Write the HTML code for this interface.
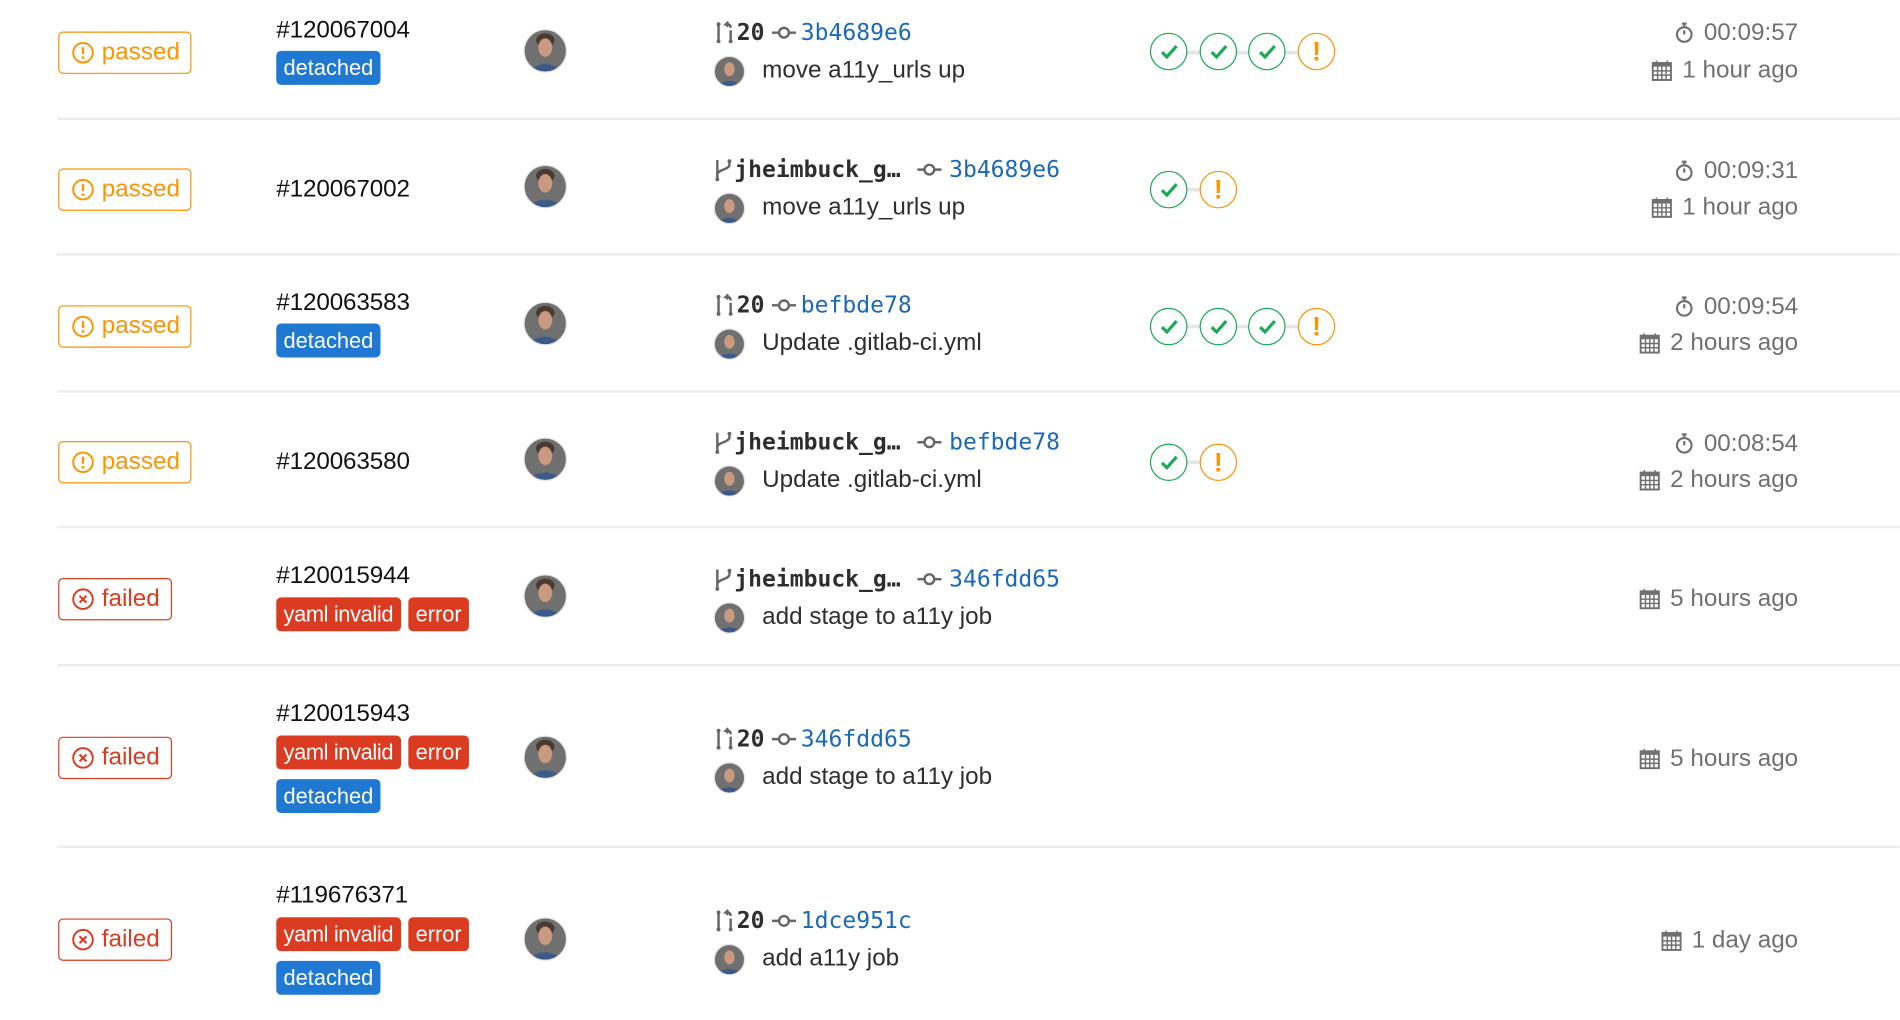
<!DOCTYPE html>
<html><head><meta charset="utf-8"><style>
html,body{margin:0;padding:0;background:#fff;width:1900px;height:1020px;overflow:hidden}
#c{position:absolute;left:0;top:0;width:1568px;height:842px;transform:scale(1.2117);transform-origin:0 0;font-family:"Liberation Sans",sans-serif}
.sep{position:absolute;left:47px;right:0;height:2px;background:#ececec}
.t{position:absolute;white-space:nowrap;line-height:30px;height:30px;font-size:20px;color:#2e2e2e}
.id{color:#111;letter-spacing:-0.1px}
.st{position:absolute;left:48px;height:33px;border:1.5px solid;border-radius:4px;font-size:20px;line-height:33px;display:flex;align-items:center;box-sizing:content-box}
.st svg{margin:0 6px 0 10px}
.ok{color:#fc9403;border-color:#fc9403;width:108px}
.ko{color:#db3b21;border-color:#db3b21;width:92px}
.bd{position:absolute;height:28px;line-height:28px;border-radius:4px;color:#fff;font-size:18px;padding:0 6px;box-sizing:border-box;white-space:nowrap;overflow:hidden}
.bl{background:#1f78d1}.rd{background:#db3b21}
.yi{width:103px;letter-spacing:-0.3px}
.av{position:absolute;width:34px;height:34px;border-radius:50%;border:1.5px solid #e3e3e3;background:radial-gradient(ellipse 6px 8px at 50% 42%,#c99a80 90%,transparent 100%),radial-gradient(ellipse 8px 6px at 50% 24%,#4a3a30 90%,transparent 100%),radial-gradient(ellipse 14px 10px at 50% 110%,#3b5a8a 90%,transparent 100%),#707070}
.sav{position:absolute;width:24px;height:24px;border-radius:50%;border:1px solid #e3e3e3;background:radial-gradient(ellipse 4.5px 6px at 50% 42%,#c99a80 90%,transparent 100%),radial-gradient(ellipse 10px 7px at 50% 110%,#3b5a8a 90%,transparent 100%),#707070}
.mono{font-family:"DejaVu Sans Mono","Liberation Mono",monospace}
.ref{font-weight:bold;color:#2e2e2e;font-size:19px}
.sha{color:#1b69b6;font-size:19px}
.sg{position:absolute;width:29px;height:29px;border-radius:50%;border:1.5px solid;background:#fff;display:flex;align-items:center;justify-content:center}
.g{border-color:#1aaa55}.o{border-color:#fc9403;color:#fc9403;font-weight:bold;font-size:22px}
.ln{position:absolute;height:3px;background:#e5e5e5}
.tm{position:absolute;right:84px;line-height:30px;height:30px;font-size:20px;color:#707070;white-space:nowrap;display:flex;align-items:center}
.tm svg{margin-right:8px}
</style></head><body><div id="c">

<div class="sep" style="top:97px"></div>
<div class="sep" style="top:209px"></div>
<div class="sep" style="top:322px"></div>
<div class="sep" style="top:434px"></div>
<div class="sep" style="top:548px"></div>
<div class="sep" style="top:698px"></div>

<!-- ROW 1 -->
<div class="st ok" style="top:26px"><svg width="19" height="19" viewBox="0 0 20 20"><circle cx="10" cy="10" r="8.5" fill="none" stroke="#fc9403" stroke-width="1.7"/><rect x="9" y="5" width="2" height="6.5" rx="1" fill="#fc9403"/><circle cx="10" cy="14.3" r="1.2" fill="#fc9403"/></svg>passed</div>
<div class="t id" style="left:228px;top:10px">#120067004</div>
<div class="bd bl" style="left:228px;top:42px">detached</div>
<div class="av" style="left:432px;top:24px"></div>
<div class="t" style="left:588px;top:12px;display:flex;align-items:center"><svg width="20" height="20" viewBox="0 0 20 20"><g fill="none" stroke="#666" stroke-width="2"><path d="M5 3v14M15 8v9M15 6c0-3-2-3-4-3l2-2M11 3l2 2"/></g><circle cx="5" cy="3" r="1.6" fill="#666"/><circle cx="5" cy="17" r="1.6" fill="#666"/><circle cx="15" cy="17" r="1.6" fill="#666"/></svg><span class="mono ref">20</span><svg style="margin:0 4px 0 6px" width="20" height="12" viewBox="0 0 20 12"><path d="M0 6h6M14 6h6" stroke="#666" stroke-width="2"/><circle cx="10" cy="6" r="4" fill="none" stroke="#666" stroke-width="2"/></svg><span class="mono sha">3b4689e6</span></div>
<div class="sav" style="left:589px;top:46px"></div>
<div class="t" style="left:629px;top:43px">move a11y_urls up</div>
<div class="ln" style="left:965px;top:42px;width:120px"></div>
<div class="sg g" style="left:949px;top:27px"><svg width="16" height="14" viewBox="0 0 16 14"><path d="M2 7l4 4 8-9" fill="none" stroke="#1aaa55" stroke-width="2.6"/></svg></div>
<div class="sg g" style="left:990px;top:27px"><svg width="16" height="14" viewBox="0 0 16 14"><path d="M2 7l4 4 8-9" fill="none" stroke="#1aaa55" stroke-width="2.6"/></svg></div>
<div class="sg g" style="left:1030px;top:27px"><svg width="16" height="14" viewBox="0 0 16 14"><path d="M2 7l4 4 8-9" fill="none" stroke="#1aaa55" stroke-width="2.6"/></svg></div>
<div class="sg o" style="left:1071px;top:27px">!</div>
<div class="tm" style="top:12px"><svg width="16" height="18" viewBox="0 0 16 18"><circle cx="8" cy="10.5" r="6" fill="none" stroke="#707070" stroke-width="1.8"/><path d="M6 1.5h4M8 2v3M8 10.5V7" stroke="#707070" stroke-width="1.8"/></svg>00:09:57</div>
<div class="tm" style="top:43px"><svg width="17" height="18" viewBox="0 0 17 18"><rect x="1" y="3" width="15" height="14" fill="none" stroke="#707070" stroke-width="1.6"/><rect x="1" y="3" width="15" height="3" fill="#707070"/><path d="M4 1v3M13 1v3M1 9.5h15M1 13h15M5 6v11M8.5 6v11M12 6v11" stroke="#707070" stroke-width="1.2"/></svg>1 hour ago</div>

<!-- ROW 2 -->
<div class="st ok" style="top:139px"><svg width="19" height="19" viewBox="0 0 20 20"><circle cx="10" cy="10" r="8.5" fill="none" stroke="#fc9403" stroke-width="1.7"/><rect x="9" y="5" width="2" height="6.5" rx="1" fill="#fc9403"/><circle cx="10" cy="14.3" r="1.2" fill="#fc9403"/></svg>passed</div>
<div class="t id" style="left:228px;top:141px">#120067002</div>
<div class="av" style="left:432px;top:136px"></div>
<div class="t" style="left:588px;top:125px;display:flex;align-items:center"><svg width="18" height="20" viewBox="0 0 18 20"><g fill="none" stroke="#666" stroke-width="2"><path d="M4 2v16M14 3v3c0 4-10 4-10 8"/></g><circle cx="4" cy="18" r="1.6" fill="#666"/><circle cx="14" cy="3" r="1.6" fill="#666"/></svg><span class="mono ref">jheimbuck_g…</span><svg style="margin:0 6px 0 14px" width="20" height="12" viewBox="0 0 20 12"><path d="M0 6h6M14 6h6" stroke="#666" stroke-width="2"/><circle cx="10" cy="6" r="4" fill="none" stroke="#666" stroke-width="2"/></svg><span class="mono sha">3b4689e6</span></div>
<div class="sav" style="left:589px;top:159px"></div>
<div class="t" style="left:629px;top:156px">move a11y_urls up</div>
<div class="ln" style="left:965px;top:155px;width:40px"></div>
<div class="sg g" style="left:949px;top:141px"><svg width="16" height="14" viewBox="0 0 16 14"><path d="M2 7l4 4 8-9" fill="none" stroke="#1aaa55" stroke-width="2.6"/></svg></div>
<div class="sg o" style="left:990px;top:141px">!</div>
<div class="tm" style="top:126px"><svg width="16" height="18" viewBox="0 0 16 18"><circle cx="8" cy="10.5" r="6" fill="none" stroke="#707070" stroke-width="1.8"/><path d="M6 1.5h4M8 2v3M8 10.5V7" stroke="#707070" stroke-width="1.8"/></svg>00:09:31</div>
<div class="tm" style="top:156px"><svg width="17" height="18" viewBox="0 0 17 18"><rect x="1" y="3" width="15" height="14" fill="none" stroke="#707070" stroke-width="1.6"/><rect x="1" y="3" width="15" height="3" fill="#707070"/><path d="M4 1v3M13 1v3M1 9.5h15M1 13h15M5 6v11M8.5 6v11M12 6v11" stroke="#707070" stroke-width="1.2"/></svg>1 hour ago</div>

<!-- ROW 3 -->
<div class="st ok" style="top:252px"><svg width="19" height="19" viewBox="0 0 20 20"><circle cx="10" cy="10" r="8.5" fill="none" stroke="#fc9403" stroke-width="1.7"/><rect x="9" y="5" width="2" height="6.5" rx="1" fill="#fc9403"/><circle cx="10" cy="14.3" r="1.2" fill="#fc9403"/></svg>passed</div>
<div class="t id" style="left:228px;top:235px">#120063583</div>
<div class="bd bl" style="left:228px;top:267px">detached</div>
<div class="av" style="left:432px;top:249px"></div>
<div class="t" style="left:588px;top:237px;display:flex;align-items:center"><svg width="20" height="20" viewBox="0 0 20 20"><g fill="none" stroke="#666" stroke-width="2"><path d="M5 3v14M15 8v9M15 6c0-3-2-3-4-3l2-2M11 3l2 2"/></g><circle cx="5" cy="3" r="1.6" fill="#666"/><circle cx="5" cy="17" r="1.6" fill="#666"/><circle cx="15" cy="17" r="1.6" fill="#666"/></svg><span class="mono ref">20</span><svg style="margin:0 4px 0 6px" width="20" height="12" viewBox="0 0 20 12"><path d="M0 6h6M14 6h6" stroke="#666" stroke-width="2"/><circle cx="10" cy="6" r="4" fill="none" stroke="#666" stroke-width="2"/></svg><span class="mono sha">befbde78</span></div>
<div class="sav" style="left:589px;top:271px"></div>
<div class="t" style="left:629px;top:268px">Update .gitlab-ci.yml</div>
<div class="ln" style="left:965px;top:268px;width:120px"></div>
<div class="sg g" style="left:949px;top:254px"><svg width="16" height="14" viewBox="0 0 16 14"><path d="M2 7l4 4 8-9" fill="none" stroke="#1aaa55" stroke-width="2.6"/></svg></div>
<div class="sg g" style="left:990px;top:254px"><svg width="16" height="14" viewBox="0 0 16 14"><path d="M2 7l4 4 8-9" fill="none" stroke="#1aaa55" stroke-width="2.6"/></svg></div>
<div class="sg g" style="left:1030px;top:254px"><svg width="16" height="14" viewBox="0 0 16 14"><path d="M2 7l4 4 8-9" fill="none" stroke="#1aaa55" stroke-width="2.6"/></svg></div>
<div class="sg o" style="left:1071px;top:254px">!</div>
<div class="tm" style="top:238px"><svg width="16" height="18" viewBox="0 0 16 18"><circle cx="8" cy="10.5" r="6" fill="none" stroke="#707070" stroke-width="1.8"/><path d="M6 1.5h4M8 2v3M8 10.5V7" stroke="#707070" stroke-width="1.8"/></svg>00:09:54</div>
<div class="tm" style="top:268px"><svg width="17" height="18" viewBox="0 0 17 18"><rect x="1" y="3" width="15" height="14" fill="none" stroke="#707070" stroke-width="1.6"/><rect x="1" y="3" width="15" height="3" fill="#707070"/><path d="M4 1v3M13 1v3M1 9.5h15M1 13h15M5 6v11M8.5 6v11M12 6v11" stroke="#707070" stroke-width="1.2"/></svg>2 hours ago</div>

<!-- ROW 4 -->
<div class="st ok" style="top:364px"><svg width="19" height="19" viewBox="0 0 20 20"><circle cx="10" cy="10" r="8.5" fill="none" stroke="#fc9403" stroke-width="1.7"/><rect x="9" y="5" width="2" height="6.5" rx="1" fill="#fc9403"/><circle cx="10" cy="14.3" r="1.2" fill="#fc9403"/></svg>passed</div>
<div class="t id" style="left:228px;top:366px">#120063580</div>
<div class="av" style="left:432px;top:361px"></div>
<div class="t" style="left:588px;top:350px;display:flex;align-items:center"><svg width="18" height="20" viewBox="0 0 18 20"><g fill="none" stroke="#666" stroke-width="2"><path d="M4 2v16M14 3v3c0 4-10 4-10 8"/></g><circle cx="4" cy="18" r="1.6" fill="#666"/><circle cx="14" cy="3" r="1.6" fill="#666"/></svg><span class="mono ref">jheimbuck_g…</span><svg style="margin:0 6px 0 14px" width="20" height="12" viewBox="0 0 20 12"><path d="M0 6h6M14 6h6" stroke="#666" stroke-width="2"/><circle cx="10" cy="6" r="4" fill="none" stroke="#666" stroke-width="2"/></svg><span class="mono sha">befbde78</span></div>
<div class="sav" style="left:589px;top:384px"></div>
<div class="t" style="left:629px;top:381px">Update .gitlab-ci.yml</div>
<div class="ln" style="left:965px;top:380px;width:40px"></div>
<div class="sg g" style="left:949px;top:366px"><svg width="16" height="14" viewBox="0 0 16 14"><path d="M2 7l4 4 8-9" fill="none" stroke="#1aaa55" stroke-width="2.6"/></svg></div>
<div class="sg o" style="left:990px;top:366px">!</div>
<div class="tm" style="top:351px"><svg width="16" height="18" viewBox="0 0 16 18"><circle cx="8" cy="10.5" r="6" fill="none" stroke="#707070" stroke-width="1.8"/><path d="M6 1.5h4M8 2v3M8 10.5V7" stroke="#707070" stroke-width="1.8"/></svg>00:08:54</div>
<div class="tm" style="top:381px"><svg width="17" height="18" viewBox="0 0 17 18"><rect x="1" y="3" width="15" height="14" fill="none" stroke="#707070" stroke-width="1.6"/><rect x="1" y="3" width="15" height="3" fill="#707070"/><path d="M4 1v3M13 1v3M1 9.5h15M1 13h15M5 6v11M8.5 6v11M12 6v11" stroke="#707070" stroke-width="1.2"/></svg>2 hours ago</div>

<!-- ROW 5 -->
<div class="st ko" style="top:477px"><svg width="19" height="19" viewBox="0 0 20 20"><circle cx="10" cy="10" r="8.5" fill="none" stroke="#db3b21" stroke-width="1.7"/><path d="M7 7l6 6M13 7l-6 6" stroke="#db3b21" stroke-width="1.8"/></svg>failed</div>
<div class="t id" style="left:228px;top:460px">#120015944</div>
<div class="bd rd yi" style="left:228px;top:493px">yaml invalid</div>
<div class="bd rd" style="left:337px;top:493px">error</div>
<div class="av" style="left:432px;top:474px"></div>
<div class="t" style="left:588px;top:463px;display:flex;align-items:center"><svg width="18" height="20" viewBox="0 0 18 20"><g fill="none" stroke="#666" stroke-width="2"><path d="M4 2v16M14 3v3c0 4-10 4-10 8"/></g><circle cx="4" cy="18" r="1.6" fill="#666"/><circle cx="14" cy="3" r="1.6" fill="#666"/></svg><span class="mono ref">jheimbuck_g…</span><svg style="margin:0 6px 0 14px" width="20" height="12" viewBox="0 0 20 12"><path d="M0 6h6M14 6h6" stroke="#666" stroke-width="2"/><circle cx="10" cy="6" r="4" fill="none" stroke="#666" stroke-width="2"/></svg><span class="mono sha">346fdd65</span></div>
<div class="sav" style="left:589px;top:497px"></div>
<div class="t" style="left:629px;top:494px">add stage to a11y job</div>
<div class="tm" style="top:479px"><svg width="17" height="18" viewBox="0 0 17 18"><rect x="1" y="3" width="15" height="14" fill="none" stroke="#707070" stroke-width="1.6"/><rect x="1" y="3" width="15" height="3" fill="#707070"/><path d="M4 1v3M13 1v3M1 9.5h15M1 13h15M5 6v11M8.5 6v11M12 6v11" stroke="#707070" stroke-width="1.2"/></svg>5 hours ago</div>

<!-- ROW 6 -->
<div class="st ko" style="top:608px"><svg width="19" height="19" viewBox="0 0 20 20"><circle cx="10" cy="10" r="8.5" fill="none" stroke="#db3b21" stroke-width="1.7"/><path d="M7 7l6 6M13 7l-6 6" stroke="#db3b21" stroke-width="1.8"/></svg>failed</div>
<div class="t id" style="left:228px;top:574px">#120015943</div>
<div class="bd rd yi" style="left:228px;top:607px">yaml invalid</div>
<div class="bd rd" style="left:337px;top:607px">error</div>
<div class="bd bl" style="left:228px;top:643px">detached</div>
<div class="av" style="left:432px;top:607px"></div>
<div class="t" style="left:588px;top:595px;display:flex;align-items:center"><svg width="20" height="20" viewBox="0 0 20 20"><g fill="none" stroke="#666" stroke-width="2"><path d="M5 3v14M15 8v9M15 6c0-3-2-3-4-3l2-2M11 3l2 2"/></g><circle cx="5" cy="3" r="1.6" fill="#666"/><circle cx="5" cy="17" r="1.6" fill="#666"/><circle cx="15" cy="17" r="1.6" fill="#666"/></svg><span class="mono ref">20</span><svg style="margin:0 4px 0 6px" width="20" height="12" viewBox="0 0 20 12"><path d="M0 6h6M14 6h6" stroke="#666" stroke-width="2"/><circle cx="10" cy="6" r="4" fill="none" stroke="#666" stroke-width="2"/></svg><span class="mono sha">346fdd65</span></div>
<div class="sav" style="left:589px;top:629px"></div>
<div class="t" style="left:629px;top:626px">add stage to a11y job</div>
<div class="tm" style="top:611px"><svg width="17" height="18" viewBox="0 0 17 18"><rect x="1" y="3" width="15" height="14" fill="none" stroke="#707070" stroke-width="1.6"/><rect x="1" y="3" width="15" height="3" fill="#707070"/><path d="M4 1v3M13 1v3M1 9.5h15M1 13h15M5 6v11M8.5 6v11M12 6v11" stroke="#707070" stroke-width="1.2"/></svg>5 hours ago</div>

<!-- ROW 7 -->
<div class="st ko" style="top:758px"><svg width="19" height="19" viewBox="0 0 20 20"><circle cx="10" cy="10" r="8.5" fill="none" stroke="#db3b21" stroke-width="1.7"/><path d="M7 7l6 6M13 7l-6 6" stroke="#db3b21" stroke-width="1.8"/></svg>failed</div>
<div class="t id" style="left:228px;top:724px">#119676371</div>
<div class="bd rd yi" style="left:228px;top:757px">yaml invalid</div>
<div class="bd rd" style="left:337px;top:757px">error</div>
<div class="bd bl" style="left:228px;top:793px">detached</div>
<div class="av" style="left:432px;top:757px"></div>
<div class="t" style="left:588px;top:745px;display:flex;align-items:center"><svg width="20" height="20" viewBox="0 0 20 20"><g fill="none" stroke="#666" stroke-width="2"><path d="M5 3v14M15 8v9M15 6c0-3-2-3-4-3l2-2M11 3l2 2"/></g><circle cx="5" cy="3" r="1.6" fill="#666"/><circle cx="5" cy="17" r="1.6" fill="#666"/><circle cx="15" cy="17" r="1.6" fill="#666"/></svg><span class="mono ref">20</span><svg style="margin:0 4px 0 6px" width="20" height="12" viewBox="0 0 20 12"><path d="M0 6h6M14 6h6" stroke="#666" stroke-width="2"/><circle cx="10" cy="6" r="4" fill="none" stroke="#666" stroke-width="2"/></svg><span class="mono sha">1dce951c</span></div>
<div class="sav" style="left:589px;top:779px"></div>
<div class="t" style="left:629px;top:776px">add a11y job</div>
<div class="tm" style="top:761px"><svg width="17" height="18" viewBox="0 0 17 18"><rect x="1" y="3" width="15" height="14" fill="none" stroke="#707070" stroke-width="1.6"/><rect x="1" y="3" width="15" height="3" fill="#707070"/><path d="M4 1v3M13 1v3M1 9.5h15M1 13h15M5 6v11M8.5 6v11M12 6v11" stroke="#707070" stroke-width="1.2"/></svg>1 day ago</div>

</div></body></html>
